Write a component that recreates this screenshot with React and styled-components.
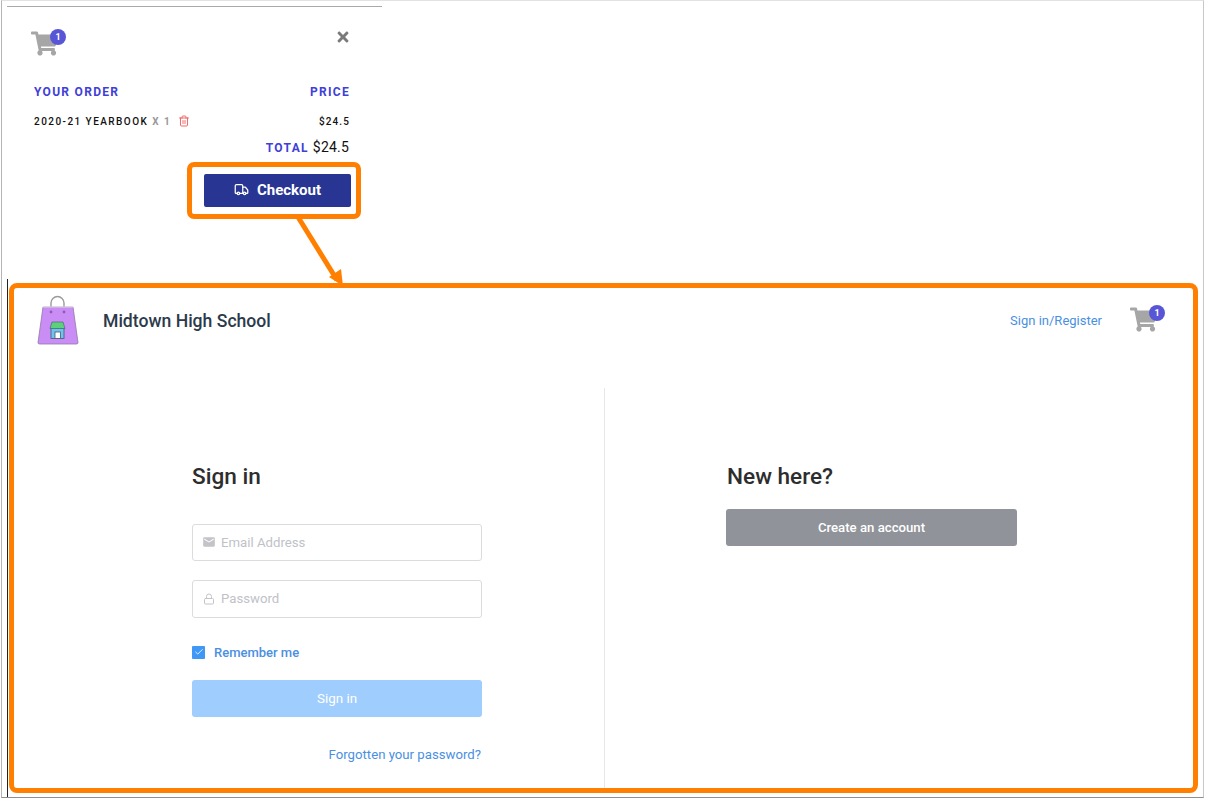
import React from "react";
import styled, { createGlobalStyle } from "styled-components";
import { FaShoppingCart, FaTimes } from "react-icons/fa";
import { MdEmail } from "react-icons/md";
import { Truck, Trash2, Lock, Check } from "lucide-react";

const Global = createGlobalStyle`
  * { box-sizing: border-box; }
  html, body { margin: 0; padding: 0; background: #fff; }
  body { font-family: Roboto, "Liberation Sans", sans-serif; }
`;

const Window = styled.div`
  position: relative;
  width: 1203px;
  height: 798px;
  margin-left: 1px;
  border-top: 1px solid #e2e2e2;
  border-left: 1px solid #b5b5b5;
  border-right: 1px solid #c8c8c8;
  border-bottom: 1px solid #8f8f8f;
`;

const TopArea = styled.div`
  height: 278px;
  padding: 5px 0 0 5px;
`;

const CartPanel = styled.div`
  width: 375px;
  border-top: 1px solid #a9a9a9;
  padding: 23px 32px 0 24px;
`;

const PanelHeader = styled.div`
  display: flex;
  align-items: flex-start;
  justify-content: space-between;
  height: 49px;
`;

const CartWrap = styled.div`
  position: relative;
  width: 27px;
  height: 25px;
  color: #a6a6a6;
  font-size: 27px;
  line-height: 0;
`;

const Badge = styled.span`
  position: absolute;
  top: -1px;
  right: -8px;
  width: 16px;
  height: 16px;
  border-radius: 50%;
  background: #5856d6;
  color: #fff;
  font-size: 9px;
  font-weight: 700;
  line-height: 16px;
  text-align: center;
`;

const CloseIcon = styled(FaTimes)`
  color: #7a7a7a;
  font-size: 16px;
  margin: -1px -1px 0 0;
`;

const OrderRow = styled.div`
  display: flex;
  justify-content: space-between;
  align-items: center;
  padding-left: 3px;
  height: ${(p) => p.$height}px;
`;

const OrderHead = styled.span`
  color: #4040d8;
  font-size: 12px;
  font-weight: 700;
  letter-spacing: 1.3px;
`;

const Item = styled.span`
  display: flex;
  align-items: center;
  color: #111;
  font-size: 10px;
  font-weight: 500;
  letter-spacing: 1.45px;
  white-space: pre;
`;

const Qty = styled.span`
  color: #999;
  font-weight: 700;
`;

const TrashIcon = styled(Trash2)`
  color: #ee5a5a;
  margin-left: 7px;
`;

const Price = styled.span`
  color: #111;
  font-size: 10px;
  font-weight: 500;
  letter-spacing: 1.1px;
`;

const TotalRow = styled.div`
  display: flex;
  justify-content: flex-end;
  align-items: baseline;
  gap: 4px;
  height: 22px;
  margin: 2px 1px 0 0;
`;

const TotalValue = styled.span`
  color: #111;
  font-size: 14px;
  letter-spacing: 0.2px;
`;

const CheckoutRow = styled.div`
  display: flex;
  justify-content: flex-end;
  margin: 1px -11px 0 0;
`;

const Highlight = styled.div`
  border: 5px solid #ff8000;
  border-radius: 7px;
  padding: 7px 5px 7px 12px;
`;

const CheckoutButton = styled.button`
  display: flex;
  align-items: center;
  justify-content: center;
  gap: 8px;
  width: 147px;
  height: 33px;
  padding: 0 0 2px;
  border: 0;
  border-radius: 2px;
  background: #283593;
  color: #fff;
  font-family: inherit;
  font-size: 15px;
  font-weight: 700;
`;

const LowerArea = styled.div`
  height: 518px;
  margin-left: 5px;
  border-left: 1px solid #222;
  padding: 4px 0 0 1px;
`;

const Frame = styled.div`
  width: 1189px;
  height: 510px;
  border: 5px solid #ff8000;
  border-radius: 8px;
`;

const Nav = styled.div`
  display: flex;
  align-items: center;
  height: 64px;
  margin-bottom: 36px;
  padding: 0 36px 0 23px;
`;

const Title = styled.div`
  margin-left: 24px;
  padding-top: 1px;
  color: #2c3a4b;
  font-size: 17.6px;
  font-weight: 500;
`;

const NavLink = styled.a`
  margin-left: auto;
  color: #4a90e2;
  font-size: 13px;
`;

const NavCart = styled(CartWrap)`
  margin-left: 28px;
  margin-top: -3px;
`;

const Columns = styled.div`
  display: flex;
  height: 400px;
`;

const LeftCol = styled.div`
  width: 591px;
  padding: 75px 0 0 178px;
  border-right: 1px solid #e8e8ea;
`;

const RightCol = styled.div`
  padding: 75px 0 0 121px;
`;

const Heading = styled.h2`
  margin: 0 0 ${(p) => p.$gap}px ${(p) => p.$indent || 0}px;
  color: #2d2d2d;
  font-size: 22.6px;
  font-weight: 500;
  line-height: 28px;
`;

const Form = styled.div`
  width: 290px;
`;

const Field = styled.div`
  display: flex;
  align-items: center;
  gap: 5px;
  height: ${(p) => p.$height}px;
  margin-bottom: ${(p) => p.$gap}px;
  padding: 0 0 1px 9px;
  border: 1px solid #dcdcdf;
  border-radius: 3px;
  color: #c0c2c8;
  font-size: 13.2px;
`;

const FieldIcon = styled.span`
  display: flex;
  align-items: center;
  justify-content: center;
  width: 14px;
  color: #c4c4c8;
`;

const Remember = styled.label`
  display: flex;
  align-items: center;
  gap: 9px;
  height: 20px;
  margin-top: 24px;
  color: #4a90e2;
  font-size: 13px;
  font-weight: 500;
`;

const CheckBox = styled.span`
  display: flex;
  align-items: center;
  justify-content: center;
  width: 13px;
  height: 13px;
  border-radius: 1px;
  background: #3f97f6;
  color: #fff;
`;

const SignInButton = styled.button`
  display: block;
  width: 100%;
  height: 37px;
  margin-top: 18px;
  padding: 0 0 1px;
  border: 0;
  border-radius: 3px;
  background: #9fcdfd;
  color: #fff;
  font-family: inherit;
  font-size: 13.4px;
`;

const Forgot = styled.a`
  display: block;
  margin-top: 28px;
  padding-right: 1px;
  color: #4a90e2;
  font-size: 13.2px;
  line-height: 20px;
  text-align: right;
`;

const CreateButton = styled.button`
  width: 291px;
  height: 37px;
  padding: 0 0 1px;
  border: 0;
  border-radius: 3px;
  background: #909399;
  color: #fff;
  font-family: inherit;
  font-size: 13.2px;
  font-weight: 500;
`;

const Arrow = styled.svg`
  position: absolute;
  left: 0;
  top: 0;
  pointer-events: none;
`;

function Cart() {
  return (
    <>
      <FaShoppingCart />
      <Badge>1</Badge>
    </>
  );
}

function BagLogo() {
  return (
    <svg width="42" height="50" viewBox="0 0 42 50">
      <path d="M14 18V8a6.5 6.5 0 0 1 13 0v10" fill="none" stroke="#9a9a9a" strokeWidth="1.4" />
      <path d="M6 12h30l5 35.500a1.500 1.500 0 0 1-1.500 1.500H2.500a1.500 1.500 0 0 1-1.500-1.500z" fill="#c98df5" stroke="#8d7aa8" strokeWidth="0.8" />
      <path d="M6 12h30" stroke="#e9e4ee" strokeWidth="1" />
      <circle cx="14" cy="17" r="1.4" fill="#8a5fb0" />
      <circle cx="27" cy="17" r="1.4" fill="#8a5fb0" />
      <rect x="14" y="33" width="13" height="10.500" fill="#6fc3ee" stroke="#3f5a72" strokeWidth="0.8" />
      <path d="M15 27h11l2 6.500H13z" fill="#5ed07c" stroke="#3f5a72" strokeWidth="0.6" />
      <rect x="18" y="37" width="5.500" height="6.500" fill="#fff" stroke="#3f5a72" strokeWidth="0.8" />
    </svg>
  );
}

export default function App() {
  return (
    <Window>
      <Global />
      <TopArea>
        <CartPanel>
          <PanelHeader>
            <CartWrap>
              <Cart />
            </CartWrap>
            <CloseIcon />
          </PanelHeader>
          <OrderRow $height={26}>
            <OrderHead>YOUR ORDER</OrderHead>
            <OrderHead>PRICE</OrderHead>
          </OrderRow>
          <OrderRow $height={32}>
            <Item>
              2020-21 YEARBOOK <Qty>X 1</Qty>
              <TrashIcon size={12} strokeWidth={1.8} />
            </Item>
            <Price>$24.5</Price>
          </OrderRow>
          <TotalRow>
            <OrderHead>TOTAL</OrderHead>
            <TotalValue>$24.5</TotalValue>
          </TotalRow>
          <CheckoutRow>
            <Highlight>
              <CheckoutButton>
                <Truck size={15} strokeWidth={2} />
                Checkout
              </CheckoutButton>
            </Highlight>
          </CheckoutRow>
        </CartPanel>
      </TopArea>
      <LowerArea>
        <Frame>
          <Nav>
            <BagLogo />
            <Title>Midtown High School</Title>
            <NavLink>Sign in/Register</NavLink>
            <NavCart>
              <Cart />
            </NavCart>
          </Nav>
          <Columns>
            <LeftCol>
              <Form>
                <Heading $gap={33}>Sign in</Heading>
                <Field $height={37} $gap={19}>
                  <FieldIcon>
                    <MdEmail size={14} />
                  </FieldIcon>
                  Email Address
                </Field>
                <Field $height={38} $gap={0}>
                  <FieldIcon>
                    <Lock size={12} strokeWidth={2} />
                  </FieldIcon>
                  Password
                </Field>
                <Remember>
                  <CheckBox>
                    <Check size={10} strokeWidth={2} />
                  </CheckBox>
                  Remember me
                </Remember>
                <SignInButton>Sign in</SignInButton>
                <Forgot>Forgotten your password?</Forgot>
              </Form>
            </LeftCol>
            <RightCol>
              <Heading $gap={18} $indent={1}>
                New here?
              </Heading>
              <CreateButton>Create an account</CreateButton>
            </RightCol>
          </Columns>
        </Frame>
      </LowerArea>
      <Arrow width="400" height="300" viewBox="0 0 400 300">
        <path d="M296 216L335 279" stroke="#ff8000" strokeWidth="5" fill="none" />
        <path d="M341 285L327 276L339 268z" fill="#ff8000" />
      </Arrow>
    </Window>
  );
}
